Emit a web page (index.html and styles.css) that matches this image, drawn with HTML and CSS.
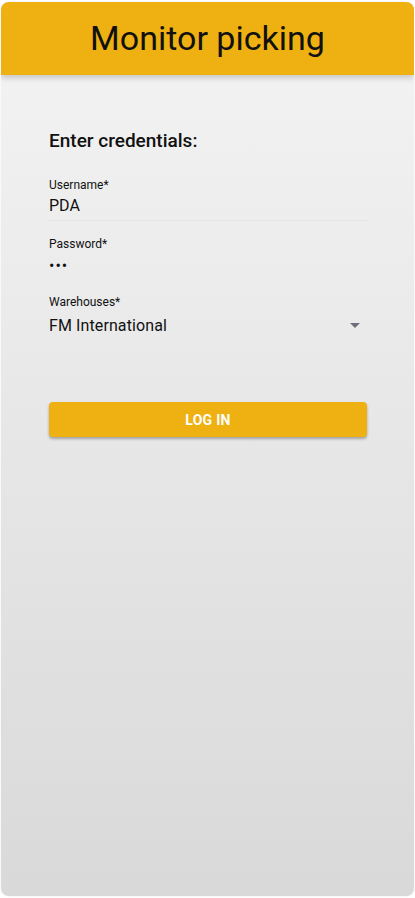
FILE: index.html
```html
<!DOCTYPE html>
<html lang="en">

<head>
    <meta charset="UTF-8">
    <meta name="viewport" content="width=device-width, initial-scale=1.0">
    <title>Monitor picking</title>
    <link rel="stylesheet" href="styles.css">
</head>

<body>
    <div class="card">
        <header class="topbar">
            <h1>Monitor picking</h1>
        </header>

        <form class="login" onsubmit="return false;">
            <h2>Enter credentials:</h2>

            <div class="field">
                <label for="username">Username*</label>
                <input type="text" id="username" value="PDA">
            </div>

            <div class="field">
                <label for="password">Password*</label>
                <input type="password" id="password" value="pda" class="pw">
            </div>

            <div class="field select-field">
                <label for="warehouse">Warehouses*</label>
                <div class="select">
                    <span>FM International</span>
                    <svg width="10" height="5" viewBox="0 0 10 5"><path d="M0 0h10L5 5z" fill="#6e6e78"/></svg>
                </div>
            </div>

            <button type="submit">Log in</button>
        </form>
    </div>
</body>

</html>
```

FILE: styles.css
```css
html,
body {
    margin: 0;
    height: 100%;
}

body {
    background: #fff;
    font-family: Roboto, 'Noto Sans', sans-serif;
    color: #111;
    padding: 2px 1px 2px 1px;
    box-sizing: border-box;
}

.card {
    height: 100%;
    border-radius: 8px;
    overflow: hidden;
    background: linear-gradient(to bottom, #f4f4f4, #d9d9d9);
    box-shadow: 0 0 1px rgba(0, 0, 0, 0.25);
}

.topbar {
    background: #eeb111;
    height: 73px;
    display: flex;
    align-items: center;
    justify-content: center;
    box-shadow: 0 3px 6px rgba(0, 0, 0, 0.18);
    position: relative;
}

.topbar h1 {
    margin: 0;
    font-weight: 400;
    font-size: 34px;
    color: #111;
    padding-bottom: 1px;
}

.login {
    padding: 54px 47px 0 48px;
}

.login h2 {
    margin: 0 0 26px;
    font-size: 19px;
    font-weight: 500;
    color: #111;
}

.field {
    display: flex;
    flex-direction: column;
    margin-bottom: 16px;
}

.field label {
    font-size: 12px;
    color: #111;
    line-height: 14px;
}

.field input {
    font-family: inherit;
    font-size: 16px;
    color: #111;
    background: transparent;
    border: none;
    border-bottom: 1px solid rgba(0, 0, 0, 0.04);
    padding: 4px 0 5px;
    outline: none;
}

.field input.pw {
    border-bottom-color: transparent;
    letter-spacing: 1px;
    padding-bottom: 6px;
    margin-top: 1px;
}

.select-field {
    margin-top: -3px;
}

.select {
    display: flex;
    align-items: center;
    justify-content: space-between;
    font-size: 16px;
    padding: 7px 7px 5px 0;
}

.select span {
    letter-spacing: 0.1px;
}

button {
    display: block;
    width: 100%;
    margin-top: 62px;
    height: 35px;
    border: none;
    border-radius: 4px;
    background: #eeb111;
    color: #fff;
    font-family: inherit;
    font-size: 14px;
    font-weight: 700;
    text-transform: uppercase;
    letter-spacing: 0.3px;
    box-shadow: 0 2px 3px rgba(0, 0, 0, 0.3);
    cursor: pointer;
}
```
